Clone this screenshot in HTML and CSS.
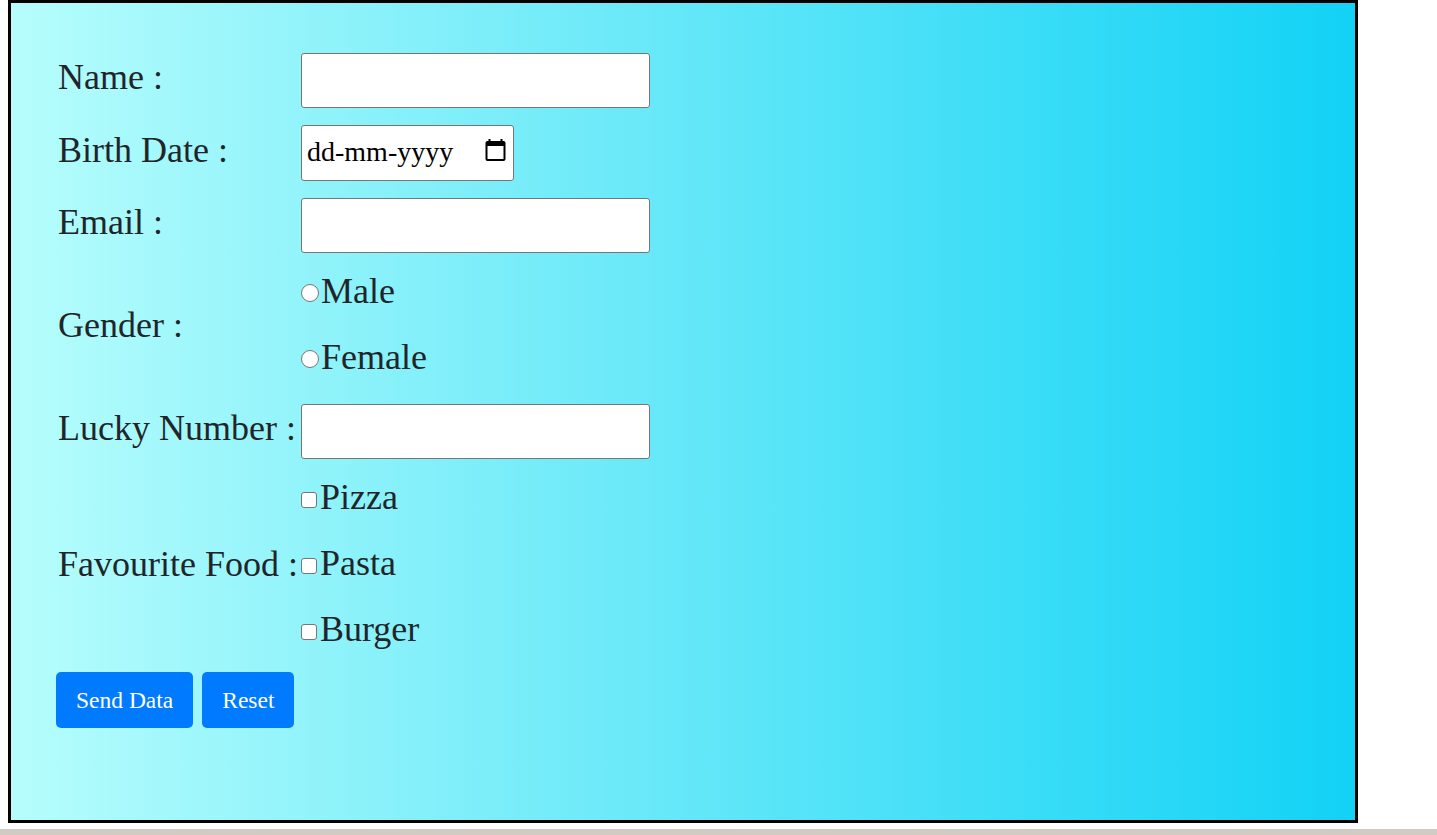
FILE: index.html
```html
<!DOCTYPE html>
<html lang="en">
<head>
<meta charset="utf-8">
<title>Form</title>
<link rel="stylesheet" href="styles.css">
</head>
<body>
<div class="panel">
  <form class="form">
    <label class="lbl" for="name">Name :</label>
    <div class="field"><input class="txt" id="name" type="text"></div>

    <label class="lbl" for="bd">Birth Date :</label>
    <div class="field">
      <div class="date" id="bd">
        <span class="date-text">dd-mm-yyyy</span>
        <svg class="cal" viewBox="2 1 20 22" aria-hidden="true"><path d="M20 3h-1V1h-2v2H7V1H5v2H4c-1.1 0-2 .9-2 2v16c0 1.1.9 2 2 2h16c1.1 0 2-.9 2-2V5c0-1.1-.9-2-2-2zm0 18H4V8h16v13z" fill="#000"/></svg>
      </div>
    </div>

    <label class="lbl" for="email">Email :</label>
    <div class="field"><input class="txt" id="email" type="email"></div>

    <span class="lbl lbl-gender">Gender :</span>
    <div class="group group-gender">
      <label class="opt"><input class="radio" type="radio" name="g">Male</label>
      <label class="opt"><input class="radio" type="radio" name="g">Female</label>
    </div>

    <label class="lbl" for="lucky">Lucky Number :</label>
    <div class="field"><input class="txt" id="lucky" type="text"></div>

    <span class="lbl lbl-food">Favourite Food :</span>
    <div class="group group-food">
      <label class="opt"><input class="check" type="checkbox">Pizza</label>
      <label class="opt"><input class="check" type="checkbox">Pasta</label>
      <label class="opt"><input class="check" type="checkbox">Burger</label>
    </div>

    <div class="actions">
      <button type="button" class="btn">Send Data</button>
      <button type="reset" class="btn">Reset</button>
    </div>
  </form>
</div>
<div class="strip"></div>
</body>
</html>
```

FILE: styles.css
```css
html {
  margin: 0;
  padding: 0;
  background: #fff;
  overflow: hidden;
}
body {
  margin: 0;
  padding: 0 8px;
  font-family: "Liberation Serif", "Times New Roman", serif;
  color: #212529;
}
.panel {
  box-sizing: border-box;
  width: 1350px;
  height: 823px;
  border: 3px solid #000;
  background: linear-gradient(to right, #b6fdfc 0%, #12d2f5 100%);
  padding: 50px 0 0 45px;
}
.form {
  display: grid;
  grid-template-columns: 245px auto;
  justify-content: start;
  align-items: center;
  row-gap: 17px;
}
.lbl {
  font-size: 36px;
  line-height: 40px;
  padding: 0 0 7px 2px;
  white-space: nowrap;
}
.field {
  display: flex;
}
.txt {
  box-sizing: border-box;
  width: 349px;
  height: 55px;
  margin: 0;
  border: 1px solid #767676;
  border-radius: 3px;
  background: #fff;
  padding: 1px 4px;
  font-family: "Liberation Serif", serif;
  font-size: 28px;
  color: #000;
  outline: none;
}
.date {
  box-sizing: border-box;
  width: 213px;
  height: 56px;
  border: 1px solid #767676;
  border-radius: 3px;
  background: #fff;
  display: flex;
  align-items: center;
  justify-content: space-between;
  padding: 0 7px 0 5px;
  font-size: 28px;
  color: #000;
}
.date-text {
  line-height: 32px;
  padding-bottom: 3px;
}
.cal {
  width: 21px;
  height: 22px;
  display: block;
  margin-top: -6px;
}
.group {
  display: flex;
  flex-direction: column;
  gap: 26px;
}
.group-gender {
  padding: 1px 0 10px;
}
.lbl-gender {
  margin-bottom: 1px;
}
.group-food {
  padding: 1px 0 6px;
}
.lbl-food {
  margin-top: 4px;
}
.opt {
  font-size: 36px;
  line-height: 40px;
  white-space: nowrap;
}
.radio, .check {
  appearance: none;
  -webkit-appearance: none;
  box-sizing: border-box;
  margin: 0 2px 1px 0;
  border: 1px solid #767676;
  background: #fff;
  vertical-align: baseline;
  display: inline-block;
}
.radio {
  border-radius: 50%;
  width: 18px;
  height: 18px;
}
.check {
  width: 16px;
  height: 16px;
  border-radius: 3px;
  margin-right: 3px;
}
.actions {
  grid-column: 1 / -1;
  display: flex;
  gap: 9px;
}
.btn {
  height: 56px;
  padding: 0 20px;
  border: none;
  border-radius: 5px;
  background: #007bff;
  color: #fff;
  font-family: "Liberation Serif", serif;
  font-size: 23.5px;
  cursor: pointer;
}
.strip {
  height: 6px;
  margin: 6px -8px 0;
  background: #d2cbc4;
}
```
